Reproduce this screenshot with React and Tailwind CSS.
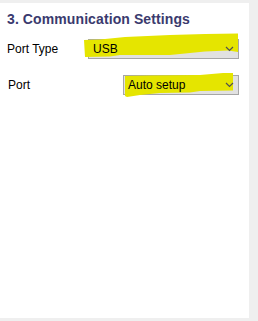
import React from "react";

function Chevron() {
  return (
    <svg width="9" height="6" viewBox="0 0 9 6" className="relative z-10 shrink-0">
      <polyline points="1,1 4.5,4.5 8,1" fill="none" stroke="#505050" strokeWidth="1.2" />
    </svg>
  );
}

function Select({ width, text, points }) {
  return (
    <div
      className="relative flex h-[20px] items-center justify-between border border-[#a6a6a6] bg-[#e1e1e1] pl-[4px] pr-[4px]"
      style={{ width }}
    >
      <svg className="pointer-events-none absolute left-[-1px] top-[-1px] overflow-visible" width="1" height="1">
        <polygon points={points} fill="#e5e500" />
      </svg>
      <span className="relative z-10 text-[12px] leading-none text-black">{text}</span>
      <Chevron />
    </div>
  );
}

export default function App() {
  return (
    <div className="h-[321px] w-[258px] bg-[#efefef] pt-[3px] font-['Liberation_Sans',Arial,sans-serif]">
      <div className="flex h-[315px] w-[249px] flex-col bg-white pl-[7px] pt-[8px]">
        <h1 className="text-[14px] font-bold leading-[16px] tracking-[0.1px] text-[#3a3a6e]">
          3. Communication Settings
        </h1>
        <div className="mt-[12px] flex items-center justify-between pr-[10px]">
          <span className="text-[12px] leading-none text-black">Port Type</span>
          <Select
            width={151}
            text="USB"
            points="-4,1 12,0.5 37,-2 82,-4 117,-5 150,-5.5 150,13 140,11.5 117,12.5 102,14 82,16 32,16 22,17.5 -3,18"
          />
        </div>
        <div className="mt-[16px] flex items-center justify-between pr-[10px]">
          <span className="pl-[1px] text-[12px] leading-none text-black">Port</span>
          <Select
            width={116}
            text="Auto setup"
            points="2,1 27,0.5 77,0 100,-2 110,-2 110,15.5 77,16 67,17.5 37,18 17,20 4,22 2,21"
          />
        </div>
      </div>
    </div>
  );
}
